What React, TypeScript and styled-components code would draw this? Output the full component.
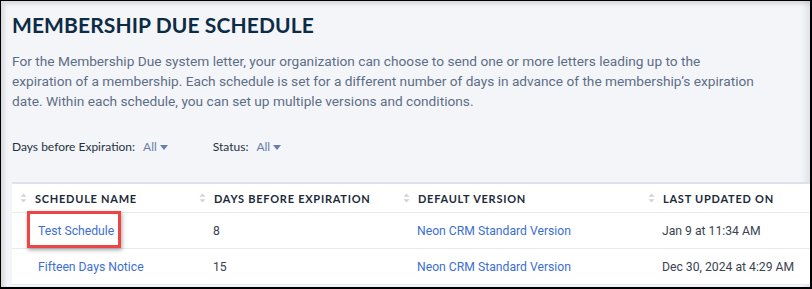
import React from 'react'
import styled, { createGlobalStyle } from 'styled-components'

const GlobalStyle = createGlobalStyle`
  html, body {
    margin: 0;
    padding: 0;
    background: #f4f5f9;
  }
  * {
    box-sizing: border-box;
  }
`

const Frame = styled.div`
  width: 812px;
  height: 289px;
  overflow: hidden;
  border-style: solid;
  border-color: #000;
  border-width: 1px 2px 2px 1px;
  background: #f4f5f9;
  box-shadow: inset 3px 3px 4px rgba(0, 0, 0, 0.12), inset -8px 0 6px -4px rgba(0, 0, 0, 0.08);
  padding: 10px 0 0 11px;
`

const Title = styled.h1`
  margin: 0;
  font-family: Lato, 'Liberation Sans', sans-serif;
  font-weight: 700;
  font-size: 21px;
  line-height: 28px;
  letter-spacing: 0.1px;
  color: #0c2b45;
`

const Intro = styled.p`
  margin: 12px 0 0;
  font-family: Roboto, 'Liberation Sans', sans-serif;
  font-size: 13.7px;
  line-height: 20px;
  color: #5d6e86;
  white-space: nowrap;
`

const Line = styled.span`
  display: block;
`

const Filters = styled.div`
  display: flex;
  gap: 45px;
  margin-top: 28px;
  font-family: Lato, 'Liberation Sans', sans-serif;
  font-size: 12px;
  line-height: 16px;
`

const Filter = styled.div`
  display: flex;
  align-items: center;
  gap: 8px;
  color: #26333f;
`

const Picker = styled.span`
  display: inline-flex;
  align-items: center;
  gap: 3px;
  color: #6a7fa6;
`

const Caret = styled.span`
  width: 0;
  height: 0;
  border-left: 4px solid transparent;
  border-right: 4px solid transparent;
  border-top: 5px solid #6a7fa6;
`

const Card = styled.div`
  margin-top: 27px;
  margin-right: -20px;
  background: #fff;
  border-top: 2px solid #dde1e9;
`

const Row = styled.div<{ $head?: boolean }>`
  display: grid;
  grid-template-columns: 179px 204px 245px 1fr;
  align-items: stretch;
  height: ${(p) => (p.$head ? '29px' : '36px')};
  border-bottom: 1px solid #e6e9ef;
`

const HeadCell = styled.div`
  display: flex;
  align-items: center;
  gap: 8px;
  padding-left: 8px;
  font-family: Lato, 'Liberation Sans', sans-serif;
  font-weight: 700;
  font-size: 11px;
  letter-spacing: 0.75px;
  color: #1c2a3a;
`

const Sort = styled.svg`
  width: 7px;
  height: 10px;
  flex: none;
`

const Cell = styled.div<{ $link?: boolean; $indent?: number }>`
  position: relative;
  display: flex;
  align-items: center;
  padding-left: ${(p) => p.$indent ?? 22}px;
  font-family: Roboto, 'Liberation Sans', sans-serif;
  font-size: 12.2px;
  color: ${(p) => (p.$link ? '#3d6fd1' : '#3a4350')};
`

const Highlight = styled.span`
  position: absolute;
  left: 15px;
  top: -2px;
  width: 94px;
  height: 37px;
  border: 3px solid #ef4444;
  box-shadow: 1px 2px 4px rgba(0, 0, 0, 0.35);
`

const SortIcon = () => (
  <Sort viewBox="0 0 7 10">
    <path d="M3.5 0.5 L6.5 3.8 H0.5 Z" fill="#cfd3da" />
    <path d="M3.5 9.5 L6.5 6.2 H0.5 Z" fill="#cfd3da" />
  </Sort>
)

const columns = ['SCHEDULE NAME', 'DAYS BEFORE EXPIRATION', 'DEFAULT VERSION', 'LAST UPDATED ON']

const rows = [
  { name: 'Test Schedule', days: '8', version: 'Neon CRM Standard Version', updated: 'Jan 9 at 11:34 AM', marked: true },
  { name: 'Fifteen Days Notice', days: '15', version: 'Neon CRM Standard Version', updated: 'Dec 30, 2024 at 4:29 AM', marked: false }
]

export default function App() {
  return (
    <>
      <GlobalStyle />
      <Frame>
        <Title>MEMBERSHIP DUE SCHEDULE</Title>
        <Intro>
          <Line>For the Membership Due system letter, your organization can choose to send one or more letters leading up to the</Line>
          <Line>expiration of a membership. Each schedule is set for a different number of days in advance of the membership’s expiration</Line>
          <Line>date. Within each schedule, you can set up multiple versions and conditions.</Line>
        </Intro>
        <Filters>
          <Filter>
            Days before Expiration:
            <Picker>
              All <Caret />
            </Picker>
          </Filter>
          <Filter>
            Status:
            <Picker>
              All <Caret />
            </Picker>
          </Filter>
        </Filters>
        <Card>
          <Row $head>
            {columns.map((c) => (
              <HeadCell key={c}>
                <SortIcon />
                {c}
              </HeadCell>
            ))}
          </Row>
          {rows.map((r) => (
            <Row key={r.name}>
              <Cell $link $indent={26}>
                {r.marked && <Highlight />}
                {r.name}
              </Cell>
              <Cell>{r.days}</Cell>
              <Cell $link>{r.version}</Cell>
              <Cell>{r.updated}</Cell>
            </Row>
          ))}
        </Card>
      </Frame>
    </>
  )
}
